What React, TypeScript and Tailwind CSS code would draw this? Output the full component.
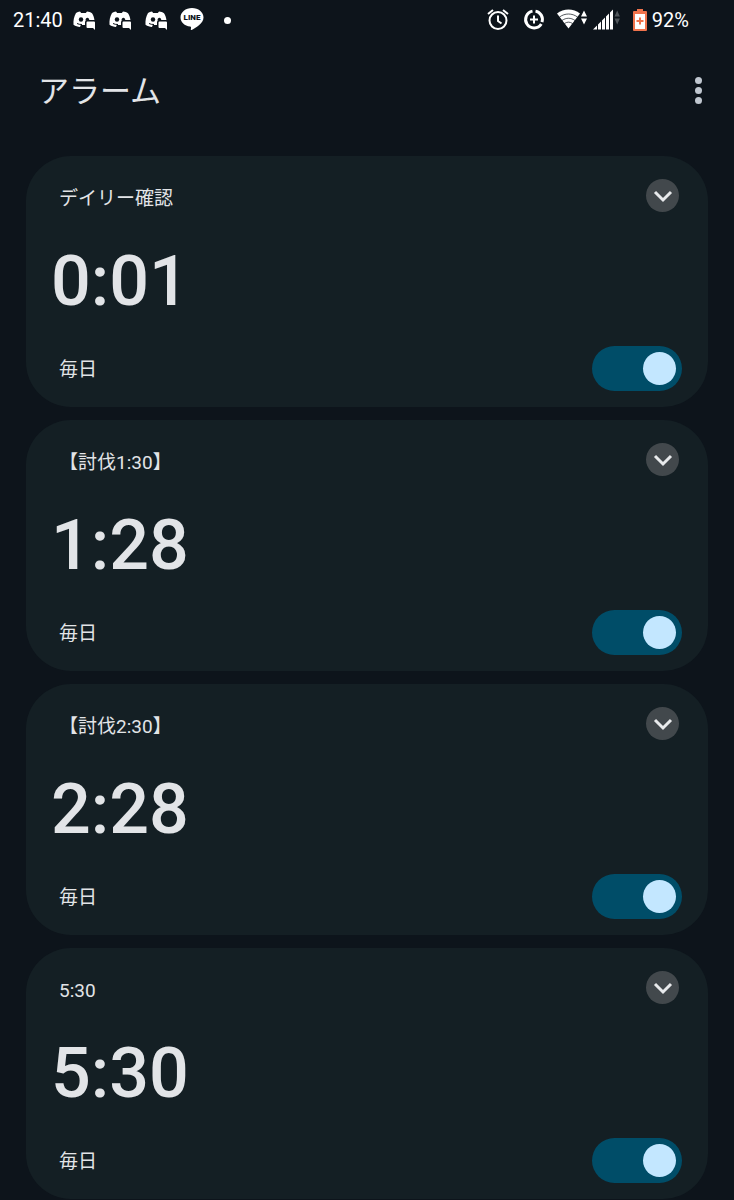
import { useState } from "react";

const alarms = [
  { id: 1, label: "デイリー確認", time: "0:01", days: "毎日" },
  { id: 2, label: "【討伐1:30】", time: "1:28", days: "毎日" },
  { id: 3, label: "【討伐2:30】", time: "2:28", days: "毎日" },
  { id: 4, label: "5:30", time: "5:30", days: "毎日" },
];

function DiscordIcon() {
  return (
    <svg className="h-5 w-6" viewBox="0 0 24 20" aria-label="Discord">
      <path
        d="M7 1.500L8.200 3h4.600L14 1.500c2 .2 3.500.8 5 1.700 1.300 2 2.200 4.500 2.500 7.300H13v4.500H7.800L7 17c-2.300-.2-4.500-1-6.500-2.300C.2 10.500 1 6.500 3 3c1.200-.8 2.500-1.300 4-1.500z"
        fill="#fff"
      />
      <ellipse cx="8" cy="9.500" rx="2.200" ry="2.300" fill="#0d141b" />
      <path d="M12.500 10.500c0-1.800.8-2.800 1.900-2.800s1.900 1 1.900 2.800z" fill="#0d141b" />
      <path d="M4 13.500c1.500.8 3 1 5 1" fill="none" stroke="#0d141b" strokeWidth={1} />
      <path
        d="M14.500 11.500h6.500q1 0 1 1V20l-2-2h-5.500q-1 0-1-1v-4.500q0-1 1-1z"
        fill="#fff"
        stroke="#0d141b"
        strokeWidth={3}
        paintOrder="stroke"
      />
    </svg>
  );
}

function LineIcon() {
  return (
    <svg className="-ml-px h-6 w-6" viewBox="0 0 24 24" aria-label="LINE">
      <path
        d="M12 0C5.600 0 .5 4.200.5 9.400c0 4.600 4.100 8.500 9.700 9.200.8.200.9.600.8 1.300l-.2 1.500c-.1.500.1.800.7.500 4-2 12-6.500 12-12.500C23.500 4.200 18.400 0 12 0z"
        fill="#fff"
      />
      <text
        x="12"
        y="12"
        textAnchor="middle"
        fontSize="8"
        className="fill-[#0d141b] font-['Roboto',sans-serif] font-black"
      >
        LINE
      </text>
    </svg>
  );
}

function AlarmIcon() {
  return (
    <svg className="h-6 w-6" viewBox="0 0 24 24" fill="none" stroke="#fff" strokeWidth={2}>
      <circle cx="12" cy="12.500" r="8.500" />
      <path d="M12 7.500V13l3.500 2.500M2 6l5-4M22 6l-5-4" />
    </svg>
  );
}

function DataSaverIcon() {
  return (
    <svg className="h-6 w-6" viewBox="0 0 24 24" fill="none" stroke="#fff">
      <path
        d="M10.500 3.100A8.500 8.500 0 1 0 19.300 16M13.500 3.100A8.500 8.500 0 0 1 20 14.100"
        strokeWidth={3}
      />
      <path d="M12 7.500v8M8 11.500h8" strokeWidth={2} />
    </svg>
  );
}

function WifiIcon() {
  return (
    <svg className="h-6 w-8" viewBox="0 0 32 24">
      <path d="M1 5.500C7.500 0 17.500 0 24 5.500L12.500 20.500z" fill="#fff" />
      <path
        d="M3.500 9c5.500-4 12.500-4 18 0M6 12.500c4-3 9-3 13 0M8.500 15.500c2.500-1.800 5.500-1.800 8 0"
        fill="none"
        stroke="#0d141b"
        strokeOpacity={0.7}
        strokeWidth={1}
      />
      <path d="M25 8.500l3-6 3 6zM25 10.500l3 6 3-6z" fill="#fff" />
    </svg>
  );
}

function SignalIcon() {
  return (
    <svg className="h-6 w-7" viewBox="0 0 28 24">
      <path d="M1 21.500l20-20v20z" fill="#fff" />
      <path d="M5.500 13v9M9.500 9v13M13.500 5v17M17.500 1v21" stroke="#0d141b" strokeWidth={1} />
      <path d="M22.500 8.500l2.700-6 2.700 6zM22.500 10.500l2.700 6 2.700-6z" fill="#50565b" />
    </svg>
  );
}

function BatteryIcon() {
  return (
    <svg className="h-6 w-4" viewBox="0 0 16 24">
      <path d="M5 1h6v2h3q1 0 1 1v18q0 1-1 1H2q-1 0-1-1V4q0-1 1-1h3z" fill="#f0734c" />
      <path d="M3 6h10v15H3z" fill="#fff" />
      <path d="M8 9.500v7M4.500 13h7" stroke="#f0734c" strokeWidth={2} />
    </svg>
  );
}

function StatusBar() {
  return (
    <div className="flex h-10 items-center justify-between pr-[45px] pl-[13px] font-['Roboto',sans-serif] text-xl text-white">
      <div className="flex items-center gap-3">
        <span className="-mr-0.5">21:40</span>
        <DiscordIcon />
        <DiscordIcon />
        <DiscordIcon />
        <LineIcon />
        <span className="ml-2 h-[7px] w-[7px] rounded-full bg-white" />
      </div>
      <div className="flex items-center">
        <AlarmIcon />
        <span className="w-3" />
        <DataSaverIcon />
        <span className="w-2.5" />
        <WifiIcon />
        <span className="w-1" />
        <SignalIcon />
        <span className="w-3" />
        <BatteryIcon />
        <span className="ml-1">92%</span>
      </div>
    </div>
  );
}

type AlarmCardProps = {
  label: string;
  time: string;
  days: string;
};

function AlarmCard({ label, time, days }: AlarmCardProps) {
  const [enabled, setEnabled] = useState(true);

  return (
    <li className="rounded-[45px] bg-[#141f24] pt-[23px] pr-[26px] pb-4 pl-[33px]">
      <div className="flex h-[33px] items-center justify-between">
        <h2 className="pt-1.5 text-[19px] leading-6">{label}</h2>
        <button
          className="mr-[3px] flex h-[33px] w-[33px] items-center justify-center rounded-full bg-[#42484c]"
          aria-label={`${label}を展開`}
        >
          <svg className="h-5 w-5" viewBox="0 0 20 20" fill="none" stroke="#e8eaec" strokeWidth={3}>
            <path d="M2 6l8 8 8-8" />
          </svg>
        </button>
      </div>
      <div className="flex h-[134px] items-center">
        <time className="-ml-2 pt-[3px] font-['Roboto',sans-serif] text-[70px] leading-none font-medium">
          {time}
        </time>
      </div>
      <div className="flex h-[45px] items-center justify-between">
        <span className="pt-0.5 text-[19px] leading-6">{days}</span>
        <input
          type="checkbox"
          role="switch"
          aria-label={`${label} ${time}`}
          checked={enabled}
          onChange={() => setEnabled(!enabled)}
          className="flex h-[45px] w-[90px] cursor-pointer appearance-none items-center rounded-full bg-[#42484c] px-1.5 before:h-[33px] before:w-[33px] before:rounded-full before:bg-[#c3e7ff] checked:justify-end checked:bg-[#004d68]"
        />
      </div>
    </li>
  );
}

function App() {
  return (
    <div className="min-h-screen bg-[#0d141b] font-['Roboto','Noto_Sans_CJK_JP',sans-serif] text-[#e2e4e7]">
      <StatusBar />
      <header className="flex h-[100px] items-center justify-between pr-[26px] pl-[38px]">
        <h1 className="pt-[3px] text-[31px] leading-10">アラーム</h1>
        <button className="flex w-5 flex-col items-center gap-[3px] py-2" aria-label="その他のオプション">
          <span className="h-[7px] w-[7px] rounded-full bg-[#c0c7d0]" />
          <span className="h-[7px] w-[7px] rounded-full bg-[#c0c7d0]" />
          <span className="h-[7px] w-[7px] rounded-full bg-[#c0c7d0]" />
        </button>
      </header>
      <ul className="flex flex-col gap-[13px] px-[26px] pt-4">
        {alarms.map((alarm) => (
          <AlarmCard key={alarm.id} label={alarm.label} time={alarm.time} days={alarm.days} />
        ))}
      </ul>
    </div>
  );
}

export default App;
